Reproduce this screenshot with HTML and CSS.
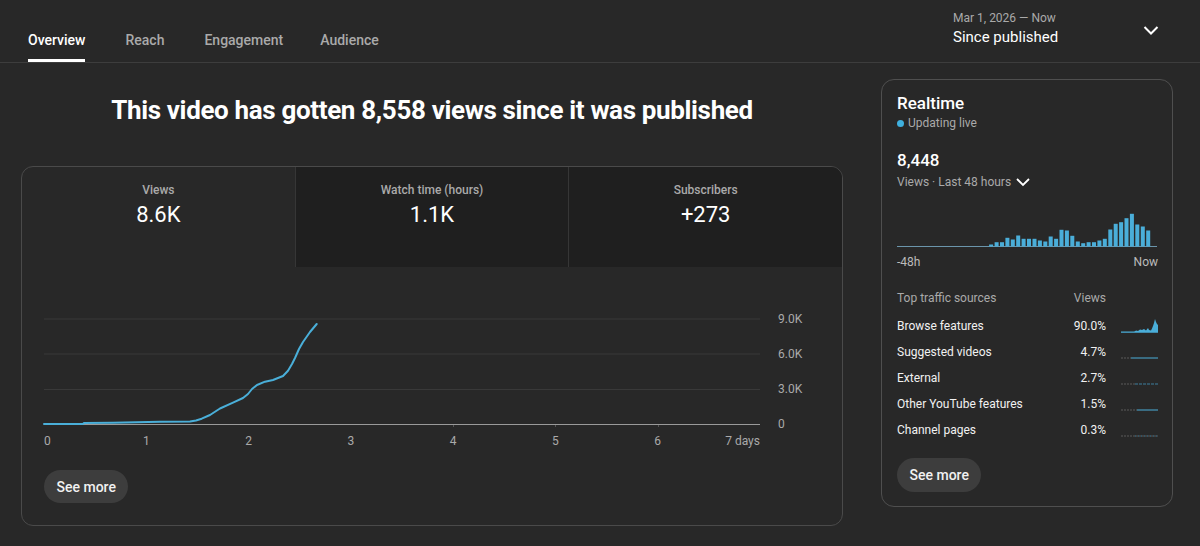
FILE: index.html
```html
<!DOCTYPE html>
<html lang="en">
<head>
  <meta charset="UTF-8" />
  <meta name="viewport" content="width=device-width, initial-scale=1.0"/>
  <title>Video analytics</title>

  <link rel="stylesheet" href="styles.css">
</head>

<body>
  <div class="topbar">
    <div class="tabs">
      <div class="tab active">Overview</div>
      <div class="tab">Reach</div>
      <div class="tab">Engagement</div>
      <div class="tab">Audience</div>
    </div>

    <div class="range">
      <div class="range-text">
        <div class="range-dates">Mar 1, 2026 — Now</div>
        <div class="range-name">Since published</div>
      </div>
      <svg class="range-chevron" width="24" height="24" viewBox="0 0 24 24">
        <path d="M5.5 9l6.5 6.5L18.5 9" fill="none" stroke="#fff" stroke-width="2"/>
      </svg>
    </div>
  </div>

  <div class="main">
    <div class="left">
      <h1 class="headline">This video has gotten 8,558 views since it was published</h1>

      <div class="card">
        <div class="metrics">
          <div class="metric selected">
            <div class="metric-label">Views</div>
            <div class="metric-value">8.6K</div>
          </div>
          <div class="metric">
            <div class="metric-label">Watch time (hours)</div>
            <div class="metric-value">1.1K</div>
          </div>
          <div class="metric">
            <div class="metric-label">Subscribers</div>
            <div class="metric-value">+273</div>
          </div>
        </div>

        <div class="chart">
          <div class="plot">
            <svg width="716" height="112" viewBox="0 0 716 112">
              <line x1="0" y1="5" x2="716" y2="5" stroke="#393939"/>
              <line x1="0" y1="40" x2="716" y2="40" stroke="#393939"/>
              <line x1="0" y1="75.5" x2="716" y2="75.5" stroke="#393939"/>
              <line x1="0" y1="110.5" x2="716" y2="110.5" stroke="#9a9a9a"/>
              <!-- day ticks -->
              <line x1="409.5" y1="111" x2="409.5" y2="113" stroke="#555"/>
              <line x1="511.5" y1="111" x2="511.5" y2="113" stroke="#555"/>
              <line x1="614.5" y1="111" x2="614.5" y2="113" stroke="#555"/>
              <polyline fill="none" stroke="#4aafd9" stroke-width="2" stroke-linejoin="round" stroke-linecap="round"
                points="0,110 39,110 40,109 69,108.7 116,107.7 146,107.5 152,106.5 157.7,104.7 166,101 176,94.5 189,88.7 199,84 204,80 208,75 213,71 221,67.7 229,66 239,62 244,56.7 248,50 251,44 255,35 259,28 266,18 272.7,10"/>
            </svg>
            <div class="xlabels">
              <span class="first">0</span>
              <span>1</span>
              <span>2</span>
              <span>3</span>
              <span>4</span>
              <span>5</span>
              <span>6</span>
              <span class="last">7 days</span>
            </div>
          </div>
          <div class="ylabels">
            <div>9.0K</div>
            <div>6.0K</div>
            <div>3.0K</div>
            <div>0</div>
          </div>
        </div>

        <button class="see-more">See more</button>
      </div>
    </div>

    <div class="realtime">
      <div class="rt-title">Realtime</div>
      <div class="rt-live"><span class="dot"></span>Updating live</div>

      <div class="rt-count">8,448</div>
      <div class="rt-sub">Views · Last 48 hours
        <svg width="16" height="16" viewBox="0 0 16 16">
          <path d="M2 5l6 6 6-6" fill="none" stroke="#fff" stroke-width="1.8"/>
        </svg>
      </div>

      <svg class="rt-bars" width="260" height="42" viewBox="0 0 260 42">
        <line x1="0" y1="41.5" x2="260" y2="41.5" stroke="#6b95ab"/>
        <g fill="#4aaed9">
          <rect x="92.1" y="39.5" width="4" height="2"/>
          <rect x="97.6" y="37.2" width="4" height="4.3"/>
          <rect x="103" y="37.2" width="4" height="4.3"/>
          <rect x="108.4" y="32.8" width="4" height="8.7"/>
          <rect x="113.8" y="34.5" width="4" height="7"/>
          <rect x="119.2" y="30.5" width="4" height="11"/>
          <rect x="124.6" y="33.8" width="4" height="7.7"/>
          <rect x="130" y="33.8" width="4" height="7.7"/>
          <rect x="135.5" y="33.8" width="4" height="7.7"/>
          <rect x="140.9" y="35.5" width="4" height="6"/>
          <rect x="146.3" y="36.5" width="4" height="5"/>
          <rect x="151.7" y="31.5" width="4" height="10"/>
          <rect x="157.1" y="33.8" width="4" height="7.7"/>
          <rect x="162.5" y="24.8" width="4" height="16.7"/>
          <rect x="167.9" y="25.5" width="4" height="16"/>
          <rect x="173.3" y="30.8" width="4" height="10.7"/>
          <rect x="178.8" y="36.5" width="4" height="5"/>
          <rect x="184.2" y="38.2" width="4" height="3.3"/>
          <rect x="189.6" y="37.2" width="4" height="4.3"/>
          <rect x="195" y="37.2" width="4" height="4.3"/>
          <rect x="200.4" y="35.5" width="4" height="6"/>
          <rect x="205.8" y="33.8" width="4" height="7.7"/>
          <rect x="211.3" y="24.5" width="4" height="17"/>
          <rect x="216.7" y="18.8" width="4" height="22.7"/>
          <rect x="222.1" y="17.2" width="4" height="24.3"/>
          <rect x="227.5" y="13.2" width="4" height="28.3"/>
          <rect x="232.9" y="8.8" width="4" height="32.7"/>
          <rect x="238.3" y="19.5" width="4" height="22"/>
          <rect x="243.8" y="21.5" width="4" height="20"/>
          <rect x="249.2" y="25.5" width="4" height="16"/>
        </g>
      </svg>
      <div class="rt-axis">
        <span>-48h</span>
        <span>Now</span>
      </div>

      <div class="src-row src-head">
        <span class="src-name">Top traffic sources</span>
        <span class="src-pct">Views</span>
        <span class="spark"></span>
      </div>
      <div class="src-row">
        <span class="src-name">Browse features</span>
        <span class="src-pct">90.0%</span>
        <svg class="spark" width="37" height="16" viewBox="0 0 37 16">
          <polygon fill="#4aaed9" points="0,14 13,14 15,12.5 17,13 19,11.5 21,12 23,11 25,12.5 27,10 28,12 30,12.5 31,10.5 32,8 33,5 34,1 35,4 36,6 37,7 37,14.5 0,14.5"/>
          <line x1="0" y1="14" x2="37" y2="14" stroke="#4aaed9"/>
        </svg>
      </div>
      <div class="src-row">
        <span class="src-name">Suggested videos</span>
        <span class="src-pct">4.7%</span>
        <svg class="spark" width="37" height="16" viewBox="0 0 37 16">
          <line x1="0" y1="14" x2="10" y2="14" stroke="#5a5a5a" stroke-dasharray="2 1"/>
          <line x1="10" y1="14" x2="37" y2="14" stroke="#4aaed9"/>
        </svg>
      </div>
      <div class="src-row">
        <span class="src-name">External</span>
        <span class="src-pct">2.7%</span>
        <svg class="spark" width="37" height="16" viewBox="0 0 37 16">
          <line x1="0" y1="14" x2="14" y2="14" stroke="#5a5a5a" stroke-dasharray="2 1"/>
          <line x1="14" y1="14" x2="37" y2="14" stroke="#3d7f9e" stroke-dasharray="3 1"/>
        </svg>
      </div>
      <div class="src-row">
        <span class="src-name">Other YouTube features</span>
        <span class="src-pct">1.5%</span>
        <svg class="spark" width="37" height="16" viewBox="0 0 37 16">
          <line x1="0" y1="14" x2="16" y2="14" stroke="#5a5a5a" stroke-dasharray="2 1"/>
          <line x1="16" y1="14" x2="37" y2="14" stroke="#4aaed9"/>
        </svg>
      </div>
      <div class="src-row">
        <span class="src-name">Channel pages</span>
        <span class="src-pct">0.3%</span>
        <svg class="spark" width="37" height="16" viewBox="0 0 37 16">
          <line x1="0" y1="14" x2="37" y2="14" stroke="#5a5a5a" stroke-dasharray="2 1"/>
          <line x1="14" y1="14" x2="37" y2="14" stroke="#3d7f9e" stroke-dasharray="1 2"/>
        </svg>
      </div>

      <button class="see-more">See more</button>
    </div>
  </div>
</body>
</html>
```

FILE: styles.css
```css
body {
  margin: 0;
  width: 1200px;
  height: 546px;
  overflow: hidden;
  background: #282828;
  color: #f1f1f1;
  font-family: Roboto, "Liberation Sans", Arial, sans-serif;
}

/* top bar */
.topbar {
  display: flex;
  height: 62px;
  border-bottom: 1px solid #3d3d3d;
}

.tabs {
  display: flex;
  gap: 40px;
  padding-left: 28px;
}

.tab {
  padding-top: 30px;
  padding-bottom: 9px;
  border-bottom: 3px solid transparent;
  font-size: 14px;
  line-height: 20px;
  font-weight: 500;
  color: #aaa;
}

.tab:last-child {
  margin-left: -3px;
}

.tab.active {
  color: #fff;
  border-bottom-color: #fff;
}

.range {
  margin-left: auto;
  display: flex;
  align-items: flex-start;
  padding: 10px 37px 0 0;
}

.range-text {
  width: 186px;
}

.range-dates {
  font-size: 12px;
  line-height: 16px;
  color: #aaa;
}

.range-name {
  font-size: 15px;
  line-height: 22px;
  color: #fff;
}

.range-chevron {
  margin-top: 8px;
}

/* layout */
.main {
  display: flex;
  gap: 38px;
  padding-left: 21px;
}

.left {
  width: 822px;
}

.headline {
  margin: 31px 0 40px;
  text-align: center;
  font-size: 26px;
  line-height: 32px;
  font-weight: 700;
  letter-spacing: -0.35px;
  color: #fff;
}

/* main card */
.card {
  border: 1px solid #4a4a4a;
  border-radius: 12px;
  overflow: hidden;
  padding-bottom: 22px;
}

.metrics {
  display: flex;
  height: 100px;
}

.metric {
  flex: 1;
  text-align: center;
  padding-top: 15px;
  background: #1f1f1f;
  border-left: 1px solid #363636;
}

.metric.selected {
  background: transparent;
  border-left: none;
}

.metric-label {
  font-size: 12px;
  line-height: 16px;
  font-weight: 500;
  color: #aaa;
}

.metric-value {
  margin-top: 3px;
  font-size: 22px;
  line-height: 28px;
  color: #fff;
}

.chart {
  display: flex;
  padding: 34.5px 0 0 22px;
}

.plot {
  width: 716px;
  padding-top: 12.5px;
}

.plot svg {
  display: block;
  overflow: visible;
}

.xlabels {
  display: flex;
  justify-content: space-between;
  margin-top: 7px;
  font-size: 12px;
  line-height: 16px;
  color: #aaa;
}

.xlabels span {
  width: 0;
  display: flex;
  justify-content: center;
  white-space: nowrap;
}

.xlabels .first {
  justify-content: flex-start;
}

.xlabels .last {
  justify-content: flex-end;
}

.ylabels {
  margin-left: 18px;
  font-size: 12px;
  color: #aaa;
}

.ylabels div {
  height: 35px;
  line-height: 35px;
}

.see-more {
  display: block;
  height: 33px;
  padding: 0 12.5px;
  border: none;
  border-radius: 17px;
  background: #3d3d3d;
  color: #f1f1f1;
  font-family: inherit;
  font-size: 14px;
  font-weight: 500;
}

.card .see-more {
  margin: 21px 0 0 22px;
}

/* realtime card */
.realtime {
  width: 261px;
  margin-top: 16px;
  padding: 12px 14px 14px 15px;
  border: 1px solid #4f4f4f;
  border-radius: 13px;
  align-self: flex-start;
}

.rt-title {
  font-size: 17px;
  line-height: 22px;
  font-weight: 500;
  color: #fff;
}

.rt-live {
  margin-top: 1px;
  display: flex;
  align-items: center;
  font-size: 12px;
  line-height: 16px;
  color: #aaa;
}

.dot {
  width: 7px;
  height: 7px;
  margin-right: 4px;
  border-radius: 50%;
  background: #3fb0df;
}

.rt-count {
  margin-top: 18px;
  font-size: 17px;
  line-height: 22px;
  font-weight: 500;
  color: #fff;
}

.rt-sub {
  margin-top: 2px;
  display: flex;
  align-items: center;
  gap: 4px;
  font-size: 12px;
  line-height: 18px;
  color: #aaa;
}

.rt-bars {
  display: block;
  margin-top: 14px;
}

.rt-axis {
  display: flex;
  justify-content: space-between;
  margin-top: 7px;
  font-size: 12px;
  line-height: 16px;
  color: #bbb;
}

.src-row {
  display: flex;
  align-items: center;
  height: 26px;
  font-size: 12px;
  color: #f1f1f1;
}

.src-head {
  height: 16px;
  margin-top: 20px;
  margin-bottom: 7px;
  color: #aaa;
}

.src-name {
  flex: 1;
}

.spark {
  width: 37px;
  margin-left: 15px;
}

.realtime .see-more {
  margin-top: 15px;
  height: 34px;
}
```
